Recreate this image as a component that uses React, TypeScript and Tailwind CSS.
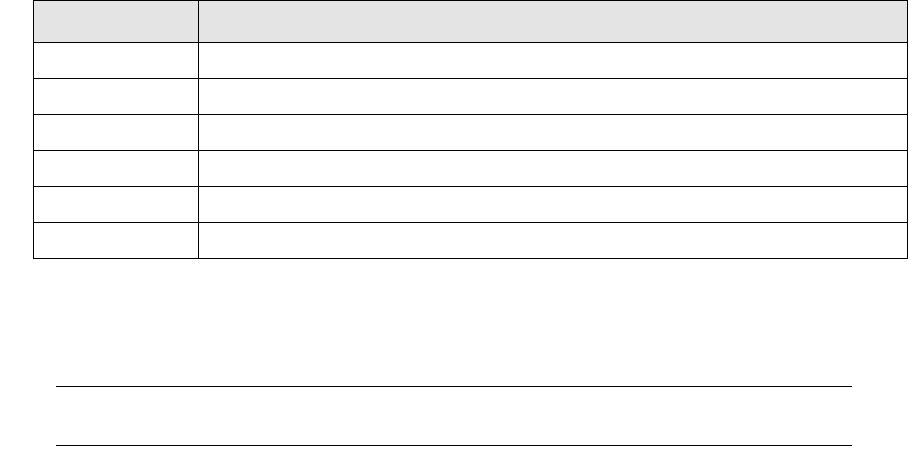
import React from "react";

const ROWS = [0, 1, 2, 3, 4, 5];

export default function App() {
    return (
        <div className="w-[908px] h-[451px] bg-white font-['Liberation_Sans',sans-serif] overflow-hidden">
            <table className="ml-[33px] w-[875px] border-collapse table-fixed">
                <thead>
                    <tr className="h-[42px] bg-[#e4e4e4]">
                        <th className="w-[165px] border border-black p-0"></th>
                        <th className="border border-black p-0"></th>
                    </tr>
                </thead>
                <tbody>
                    {ROWS.map((r) => (
                        <tr key={r} className="h-[36px]">
                            <td className="border border-black p-0"></td>
                            <td className="border border-black p-0"></td>
                        </tr>
                    ))}
                </tbody>
            </table>

            {/* Two rules below the table */}
            <div className="ml-[56px] w-[796px] mt-[127px]">
                <div className="border-t border-black"></div>
                <div className="h-[58px]"></div>
                <div className="border-t border-black"></div>
            </div>
        </div>
    );
}
